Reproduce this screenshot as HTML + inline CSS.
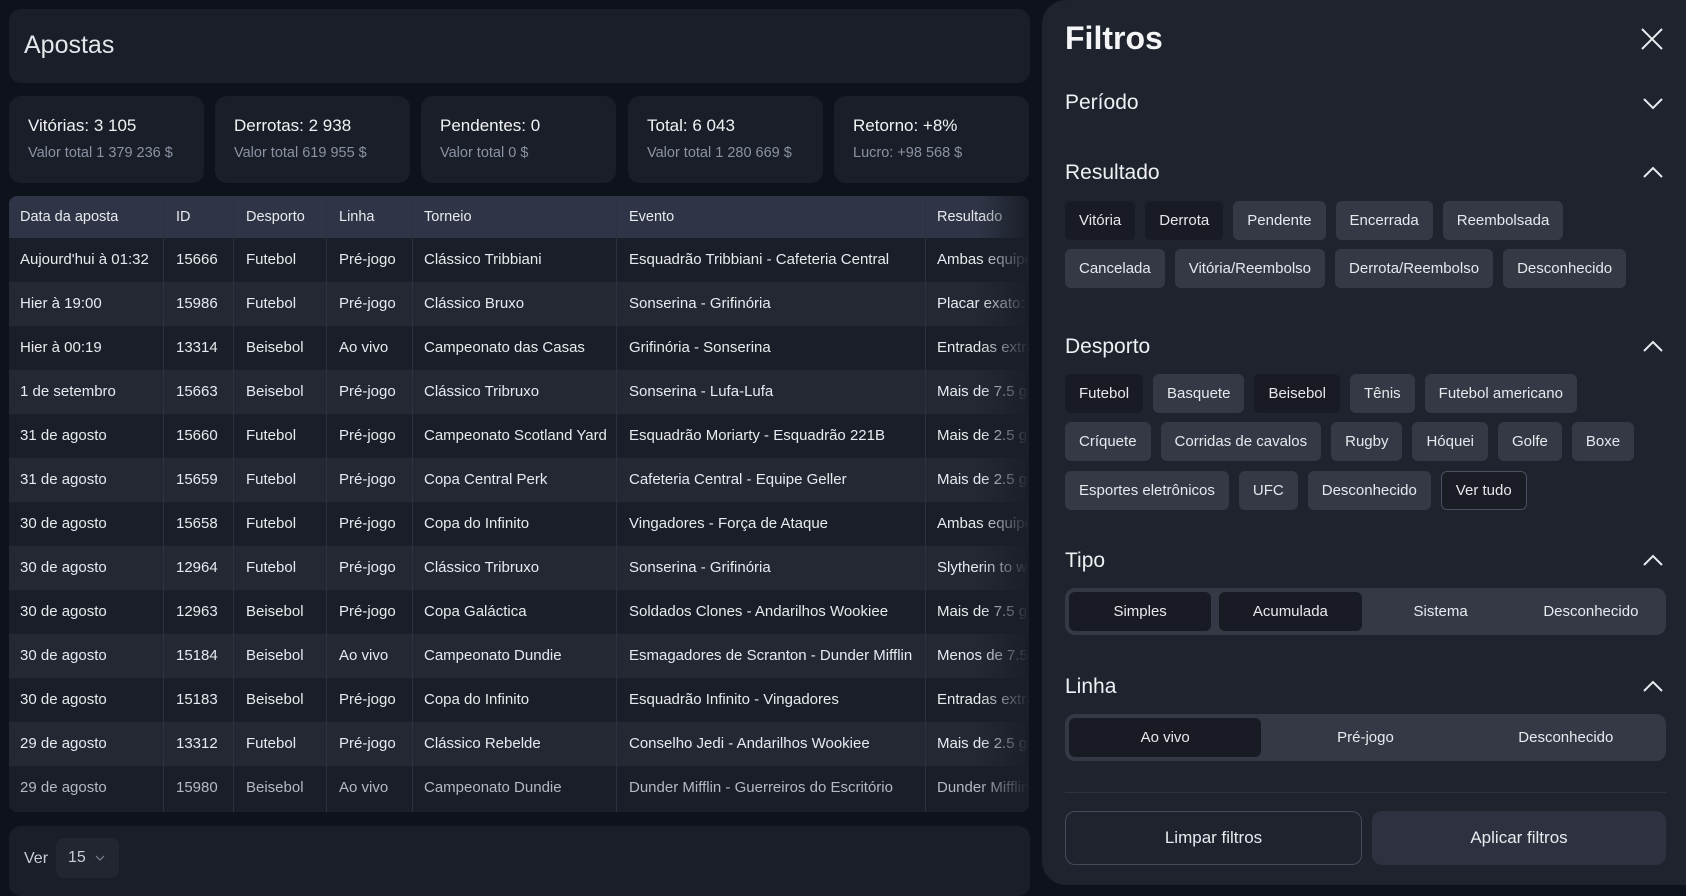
<!DOCTYPE html>
<html><head><meta charset="utf-8"><style>
*{box-sizing:border-box;margin:0;padding:0}
body{width:1686px;height:885px;overflow:hidden;background:#0e121a;font-family:"Liberation Sans",sans-serif;color:#e8eaee;position:relative}
.card{position:absolute;background:#1a1e28;border-radius:12px}
.stat{top:96px;height:87px;width:195px}
.stat .t{position:absolute;left:19px;top:20px;font-size:17px;color:#f1f2f4}
.stat .s{position:absolute;left:19px;top:49px;font-size:14.5px;color:#8a92a3}
.tbl{position:absolute;left:9px;top:196px;width:1020px;height:616px;border-radius:8px;overflow:hidden;background:#1a1e28}
.row{position:absolute;left:0;width:1020px;height:44px;font-size:15px;line-height:44px;white-space:nowrap}
.row span{position:absolute;top:0}
.hd{background:#2f3546;height:42px;line-height:42px;font-size:14.5px}
.alt{background:#232833}
.vl{position:absolute;top:0;width:1px;height:616px;background:#2c3140}
.fade{position:absolute;right:0;top:0;width:50px;height:616px;background:linear-gradient(90deg,rgba(26,30,40,0),#1a1e28)}
.drawer{position:absolute;left:1042px;top:0;width:644px;height:885px;background:#1f232d;border-radius:24px 0 0 24px}
.h2{position:absolute;left:23px;font-size:21px;color:#eef0f3}
.chev{position:absolute;left:600px;width:22px;height:14px}
.chips{position:absolute;left:23px;display:flex;gap:10px}
.chip{height:39px;line-height:39px;padding:0 14px;border-radius:6px;background:#343945;font-size:15px;color:#e6e8ec;white-space:nowrap}
.chip.d{background:#181b23}
.chip.o{background:#1a1d25;border:1px solid #4a5060;line-height:37px}
.seg{position:absolute;left:23px;width:601px;height:47px;background:#343945;border-radius:10px;display:flex;padding:4px;gap:8px}
.seg div{flex:1;text-align:center;line-height:39px;font-size:15px;border-radius:6px}
.seg .d{background:#181b23}
.btn{position:absolute;top:811px;height:54px;line-height:54px;text-align:center;font-size:17px;border-radius:10px}
</style></head><body>
<div class="card" style="left:9px;top:9px;width:1021px;height:74px"><div style="position:absolute;left:15px;top:22px;font-size:25px;color:#e4e6ea">Apostas</div></div>
<div class="card stat" style="left:9px"><div class="t">Vitórias: 3 105</div><div class="s">Valor total 1 379 236 $</div></div>
<div class="card stat" style="left:215px"><div class="t">Derrotas: 2 938</div><div class="s">Valor total 619 955 $</div></div>
<div class="card stat" style="left:421px"><div class="t">Pendentes: 0</div><div class="s">Valor total 0 $</div></div>
<div class="card stat" style="left:628px"><div class="t">Total: 6 043</div><div class="s">Valor total 1 280 669 $</div></div>
<div class="card stat" style="left:834px"><div class="t">Retorno: +8%</div><div class="s">Lucro: +98 568 $</div></div>

<div class="tbl">
<div class="row hd" style="top:0"><span style="left:11px">Data da aposta</span><span style="left:167px">ID</span><span style="left:237px">Desporto</span><span style="left:330px">Linha</span><span style="left:415px">Torneio</span><span style="left:620px">Evento</span><span style="left:928px">Resultado</span></div>
<div class="row" style="top:42px"><span style="left:11px">Aujourd'hui à 01:32</span><span style="left:167px">15666</span><span style="left:237px">Futebol</span><span style="left:330px">Pré-jogo</span><span style="left:415px">Clássico Tribbiani</span><span style="left:620px">Esquadrão Tribbiani - Cafeteria Central</span><span style="left:928px">Ambas equipes</span></div>
<div class="row alt" style="top:86px"><span style="left:11px">Hier à 19:00</span><span style="left:167px">15986</span><span style="left:237px">Futebol</span><span style="left:330px">Pré-jogo</span><span style="left:415px">Clássico Bruxo</span><span style="left:620px">Sonserina - Grifinória</span><span style="left:928px">Placar exato: 1</span></div>
<div class="row" style="top:130px"><span style="left:11px">Hier à 00:19</span><span style="left:167px">13314</span><span style="left:237px">Beisebol</span><span style="left:330px">Ao vivo</span><span style="left:415px">Campeonato das Casas</span><span style="left:620px">Grifinória - Sonserina</span><span style="left:928px">Entradas extra</span></div>
<div class="row alt" style="top:174px"><span style="left:11px">1 de setembro</span><span style="left:167px">15663</span><span style="left:237px">Beisebol</span><span style="left:330px">Pré-jogo</span><span style="left:415px">Clássico Tribruxo</span><span style="left:620px">Sonserina - Lufa-Lufa</span><span style="left:928px">Mais de 7.5 g</span></div>
<div class="row" style="top:218px"><span style="left:11px">31 de agosto</span><span style="left:167px">15660</span><span style="left:237px">Futebol</span><span style="left:330px">Pré-jogo</span><span style="left:415px">Campeonato Scotland Yard</span><span style="left:620px">Esquadrão Moriarty - Esquadrão 221B</span><span style="left:928px">Mais de 2.5 g</span></div>
<div class="row alt" style="top:262px"><span style="left:11px">31 de agosto</span><span style="left:167px">15659</span><span style="left:237px">Futebol</span><span style="left:330px">Pré-jogo</span><span style="left:415px">Copa Central Perk</span><span style="left:620px">Cafeteria Central - Equipe Geller</span><span style="left:928px">Mais de 2.5 g</span></div>
<div class="row" style="top:306px"><span style="left:11px">30 de agosto</span><span style="left:167px">15658</span><span style="left:237px">Futebol</span><span style="left:330px">Pré-jogo</span><span style="left:415px">Copa do Infinito</span><span style="left:620px">Vingadores - Força de Ataque</span><span style="left:928px">Ambas equipes</span></div>
<div class="row alt" style="top:350px"><span style="left:11px">30 de agosto</span><span style="left:167px">12964</span><span style="left:237px">Futebol</span><span style="left:330px">Pré-jogo</span><span style="left:415px">Clássico Tribruxo</span><span style="left:620px">Sonserina - Grifinória</span><span style="left:928px">Slytherin to w</span></div>
<div class="row" style="top:394px"><span style="left:11px">30 de agosto</span><span style="left:167px">12963</span><span style="left:237px">Beisebol</span><span style="left:330px">Pré-jogo</span><span style="left:415px">Copa Galáctica</span><span style="left:620px">Soldados Clones - Andarilhos Wookiee</span><span style="left:928px">Mais de 7.5 g</span></div>
<div class="row alt" style="top:438px"><span style="left:11px">30 de agosto</span><span style="left:167px">15184</span><span style="left:237px">Beisebol</span><span style="left:330px">Ao vivo</span><span style="left:415px">Campeonato Dundie</span><span style="left:620px">Esmagadores de Scranton - Dunder Mifflin</span><span style="left:928px">Menos de 7.5</span></div>
<div class="row" style="top:482px"><span style="left:11px">30 de agosto</span><span style="left:167px">15183</span><span style="left:237px">Beisebol</span><span style="left:330px">Pré-jogo</span><span style="left:415px">Copa do Infinito</span><span style="left:620px">Esquadrão Infinito - Vingadores</span><span style="left:928px">Entradas extra</span></div>
<div class="row alt" style="top:526px"><span style="left:11px">29 de agosto</span><span style="left:167px">13312</span><span style="left:237px">Futebol</span><span style="left:330px">Pré-jogo</span><span style="left:415px">Clássico Rebelde</span><span style="left:620px">Conselho Jedi - Andarilhos Wookiee</span><span style="left:928px">Mais de 2.5 g</span></div>
<div class="row" style="top:570px;color:#b4b9c3"><span style="left:11px">29 de agosto</span><span style="left:167px">15980</span><span style="left:237px">Beisebol</span><span style="left:330px">Ao vivo</span><span style="left:415px">Campeonato Dundie</span><span style="left:620px">Dunder Mifflin - Guerreiros do Escritório</span><span style="left:928px">Dunder Mifflin</span></div>
<div class="vl" style="left:154px"></div><div class="vl" style="left:224px"></div><div class="vl" style="left:317px"></div><div class="vl" style="left:403px"></div><div class="vl" style="left:607px"></div><div class="vl" style="left:916px"></div>
<div class="fade"></div>
</div>

<div class="card" style="left:9px;top:826px;width:1021px;height:70px">
<div style="position:absolute;left:15px;top:24px;font-size:16px;color:#c8ccd4">Ver</div>
<div style="position:absolute;left:47px;top:12px;width:63px;height:40px;background:#222631;border-radius:8px"><span style="position:absolute;left:12px;top:11px;font-size:16px;color:#c8ccd4">15</span><svg style="position:absolute;left:39px;top:17px" width="10" height="6" viewBox="0 0 10 6"><path d="M1 1l4 4 4-4" fill="none" stroke="#7c8392" stroke-width="1.2"/></svg></div>
</div>

<div class="drawer">
<div style="position:absolute;left:23px;top:20px;font-size:32px;font-weight:bold;color:#f4f5f7">Filtros</div>
<svg style="position:absolute;left:599px;top:28px" width="22" height="22" viewBox="0 0 22 22"><path d="M1 1L21 21M21 1L1 21" stroke="#e8eaee" stroke-width="2"/></svg>
<div class="h2" style="top:91px">Período</div>
<svg class="chev" style="top:96px" viewBox="0 0 22 14"><path d="M2 3l9 9 9-9" fill="none" stroke="#e8eaee" stroke-width="2"/></svg>
<div class="h2" style="top:161px">Resultado</div>
<svg class="chev" style="top:166px" viewBox="0 0 22 14"><path d="M2 11l9-9 9 9" fill="none" stroke="#e8eaee" stroke-width="2"/></svg>
<div class="chips" style="top:201px"><div class="chip d">Vitória</div><div class="chip d">Derrota</div><div class="chip">Pendente</div><div class="chip">Encerrada</div><div class="chip">Reembolsada</div></div>
<div class="chips" style="top:249px"><div class="chip">Cancelada</div><div class="chip">Vitória/Reembolso</div><div class="chip">Derrota/Reembolso</div><div class="chip">Desconhecido</div></div>
<div class="h2" style="top:335px">Desporto</div>
<svg class="chev" style="top:340px" viewBox="0 0 22 14"><path d="M2 11l9-9 9 9" fill="none" stroke="#e8eaee" stroke-width="2"/></svg>
<div class="chips" style="top:374px"><div class="chip d">Futebol</div><div class="chip">Basquete</div><div class="chip d">Beisebol</div><div class="chip">Tênis</div><div class="chip">Futebol americano</div></div>
<div class="chips" style="top:422px"><div class="chip">Críquete</div><div class="chip">Corridas de cavalos</div><div class="chip">Rugby</div><div class="chip">Hóquei</div><div class="chip">Golfe</div><div class="chip">Boxe</div></div>
<div class="chips" style="top:471px"><div class="chip">Esportes eletrônicos</div><div class="chip">UFC</div><div class="chip">Desconhecido</div><div class="chip o">Ver tudo</div></div>
<div class="h2" style="top:549px">Tipo</div>
<svg class="chev" style="top:554px" viewBox="0 0 22 14"><path d="M2 11l9-9 9 9" fill="none" stroke="#e8eaee" stroke-width="2"/></svg>
<div class="seg" style="top:588px"><div class="d">Simples</div><div class="d">Acumulada</div><div>Sistema</div><div>Desconhecido</div></div>
<div class="h2" style="top:675px">Linha</div>
<svg class="chev" style="top:680px" viewBox="0 0 22 14"><path d="M2 11l9-9 9 9" fill="none" stroke="#e8eaee" stroke-width="2"/></svg>
<div class="seg" style="top:714px"><div class="d">Ao vivo</div><div>Pré-jogo</div><div>Desconhecido</div></div>
<div style="position:absolute;left:23px;top:792px;width:601px;height:1px;background:#2e3340"></div>
<div class="btn" style="left:23px;width:297px;border:1px solid #444a58;line-height:52px">Limpar filtros</div>
<div class="btn" style="left:330px;width:294px;background:#2e3240">Aplicar filtros</div>
</div>
</body></html>
